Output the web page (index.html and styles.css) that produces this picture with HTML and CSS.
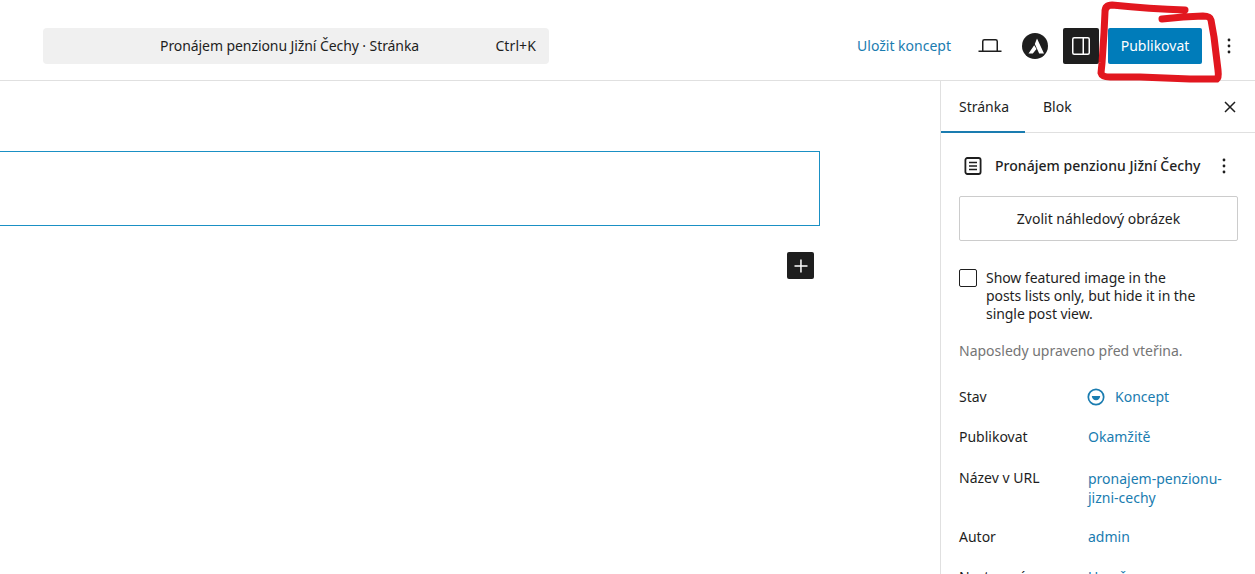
FILE: index.html
```html
<!DOCTYPE html>
<html lang="cs">
<head>
<meta charset="utf-8">
<title>Pronájem penzionu Jižní Čechy</title>
<link rel="stylesheet" href="styles.css">
</head>
<body>
<div class="app">
  <header class="topbar">
    <div class="command"><span class="command-title">Pronájem penzionu Jižní Čechy · Stránka</span><span class="command-key">Ctrl+K</span></div>
    <div class="actions">
      <a class="save">Uložit koncept</a>
      <svg class="laptop" width="24" height="24" viewBox="0 0 24 24"><path fill="none" stroke="#1e1e1e" stroke-width="1.500" d="M4.750 17V7.500c0-1 .7-1.700 1.700-1.700h11.100c1 0 1.700.7 1.700 1.700V17M.5 17.250h23"/></svg>
      <svg class="astra" width="26" height="26" viewBox="0 0 26 26"><circle cx="13" cy="13" r="13" fill="#1e1e1e"/><path fill="#fff" d="M15 5.500 22 20.500 17.200 20.500 12.800 11zM12.200 12.300 14.500 16 10.800 20.500 6.500 20.500z"/></svg>
      <button class="toggle"><svg width="24" height="24" viewBox="0 0 24 24"><rect x="3.750" y="3.750" width="16.500" height="16.500" rx="1.500" fill="none" stroke="#fff" stroke-width="1.500"/><path d="M14.250 4v16" stroke="#fff" stroke-width="1.500"/></svg></button>
      <button class="publish">Publikovat</button>
      <svg class="dots" width="6" height="18" viewBox="0 0 6 18"><circle cx="3" cy="3" r="1.400"/><circle cx="3" cy="9" r="1.400"/><circle cx="3" cy="15" r="1.400"/></svg>
    </div>
  </header>
  <div class="body">
    <main class="canvas">
      <div class="block"></div>
      <div class="inserter-row"><button class="inserter"><svg width="16" height="16" viewBox="0 0 16 16"><path fill="#fff" d="M7.200 1.500h1.500v5.700h5.800v1.500H8.700v5.800H7.200V8.700H1.500V7.200h5.700z"/></svg></button></div>
    </main>
    <aside class="sidebar">
      <div class="tabs">
        <span class="tab active">Stránka</span>
        <span class="tab">Blok</span>
        <svg class="close" width="12" height="12" viewBox="0 0 12 12"><path d="M1 1l10 10M11 1L1 11" stroke="#1e1e1e" stroke-width="1.500" fill="none"/></svg>
      </div>
      <div class="panel">
        <div class="page-title">
          <svg class="doc" width="18" height="18" viewBox="0 0 18 18"><rect x="1.400" y="1" width="15.200" height="16" rx="2" fill="none" stroke="#1e1e1e" stroke-width="1.800"/><path d="M5 5.500h8M5 9h8M5 12.500h8" stroke="#1e1e1e" stroke-width="1.500"/></svg>
          <strong>Pronájem penzionu Jižní Čechy</strong>
          <svg class="dots" width="6" height="18" viewBox="0 0 6 18"><circle cx="3" cy="3" r="1.400"/><circle cx="3" cy="9" r="1.400"/><circle cx="3" cy="15" r="1.400"/></svg>
        </div>
        <button class="featured">Zvolit náhledový obrázek</button>
        <label class="check"><span class="box"></span><span class="check-text">Show featured image in the<br>posts lists only, but hide it in the<br>single post view.</span></label>
        <p class="modified">Naposledy upraveno před vteřina.</p>
        <dl class="rows">
          <dt>Stav</dt>
          <dd class="status"><svg width="18" height="18" viewBox="0 0 18 18"><circle cx="9" cy="9" r="7.700" fill="none" stroke="#1a7cb0" stroke-width="1.700"/><path fill="#1a7cb0" d="M4.800 8h8.400a4.200 4.200 0 0 1-8.400 0z"/></svg><a>Koncept</a></dd>
          <dt>Publikovat</dt>
          <dd class="tall"><a>Okamžitě</a></dd>
          <dt>Název v URL</dt>
          <dd class="slug"><a>pronajem-penzionu-<br>jizni-cechy</a></dd>
          <dt>Autor</dt>
          <dd><a>admin</a></dd>
          <dt>Nastavení</dt>
          <dd><a>Uzavřeno</a></dd>
        </dl>
      </div>
    </aside>
  </div>
  <svg class="scribble" width="165" height="90" viewBox="0 0 165 90"><path d="M95 10 Q60 9 22 5 Q15 5 15 12 L14 33 L12 63 L11 73 Q12 77 20 77 L50 77 L100 79 L127 79 Q129 78 128 70 L124 37 L121 20 Q120 16 113 16 L93 17 L72 19" fill="none" stroke="#e2171f" stroke-width="7" stroke-linecap="round" stroke-linejoin="round"/></svg>
</div>
</body>
</html>
```
FILE: styles.css
```css
* { box-sizing: border-box; }
html, body { margin: 0; height: 100%; overflow: hidden; }
body { background: #fff; color: #1e1e1e; font: 14px/18px "Noto Sans", "Open Sans", sans-serif; }
.app { position: relative; height: 574px; overflow: hidden; display: flex; flex-direction: column; }
.topbar { height: 81px; flex: none; display: flex; align-items: flex-start; justify-content: space-between; padding: 28px 23px 0 43px; border-bottom: 1px solid #e0e0e0; }
.command { width: 506px; height: 36px; background: #f0f0f0; border-radius: 4px; display: flex; align-items: center; padding: 0 13px 0 117px; justify-content: space-between; }
.command-title { letter-spacing: -0.08px; }
.command-key { letter-spacing: 0.1px; }
.actions { display: flex; align-items: center; height: 36px; }
.save { color: #1a7cb0; margin-right: 27px; }
.laptop { margin-right: 20px; }
.astra { margin-right: 15px; }
.toggle { width: 36px; height: 36px; border: 0; border-radius: 2px; background: #1e1e1e; padding: 6px; margin-right: 9px; }
.toggle svg { display: block; }
.publish { width: 94px; height: 36px; border: 0; border-radius: 2px; background: #007cba; color: #fff; font: inherit; margin-right: 24px; }
.dots { fill: #1e1e1e; flex: none; }
.body { flex: 1; display: flex; min-height: 0; }
.canvas { flex: 1; padding-top: 70px; }
.block { width: 820px; height: 75px; border-top: 1px solid #1a90c4; border-right: 1px solid #1a90c4; border-bottom: 1px solid #1a90c4; }
.inserter-row { width: 814px; display: flex; justify-content: flex-end; margin-top: 26px; }
.inserter { width: 27px; height: 27px; border: 0; padding: 0; border-radius: 2px; background: #1e1e1e; display: flex; align-items: center; justify-content: center; }
.sidebar { width: 315px; flex: none; border-left: 1px solid #e0e0e0; }
.tabs { height: 52px; display: flex; align-items: stretch; border-bottom: 1px solid #e0e0e0; }
.tab { display: flex; align-items: center; padding: 0 18px; height: 52px; }
.tab.active { width: 84px; box-shadow: inset 0 -2px 0 #1a7cb0; }
.close { align-self: center; margin-left: auto; margin-right: 19px; }
.panel { padding: 24px 18px 0; }
.page-title { display: flex; align-items: center; height: 18px; margin-left: 5px; margin-bottom: 21px; gap: 13px; }
.page-title strong { font-weight: 500; flex: 1; white-space: nowrap; letter-spacing: 0.03px; }
.page-title .dots { margin-right: 10px; }
.featured { display: block; width: 279px; height: 45px; background: #fff; border: 1px solid #ccc; border-radius: 2px; font: inherit; color: #1e1e1e; }
.check { display: flex; gap: 9px; margin-top: 28px; }
.check-text { letter-spacing: -0.06px; }
.box { width: 18px; height: 18px; border: 1px solid #1e1e1e; border-radius: 2px; flex: none; }
.modified { margin: 19px 0 0; color: #757575; }
.rows { margin: 28px 0 0; display: grid; grid-template-columns: 129px 1fr; row-gap: 22px; }
.rows dt, .rows dd { margin: 0; }
.rows dd.tall { min-height: 19px; }
.rows dd.slug { line-height: 19px; margin-bottom: -1px; }
.rows a { color: #1a7cb0; }
.rows dd.status { display: flex; align-items: center; gap: 10px; margin-left: -1px; }
.scribble { position: absolute; right: 0; top: 0; pointer-events: none; }
```
